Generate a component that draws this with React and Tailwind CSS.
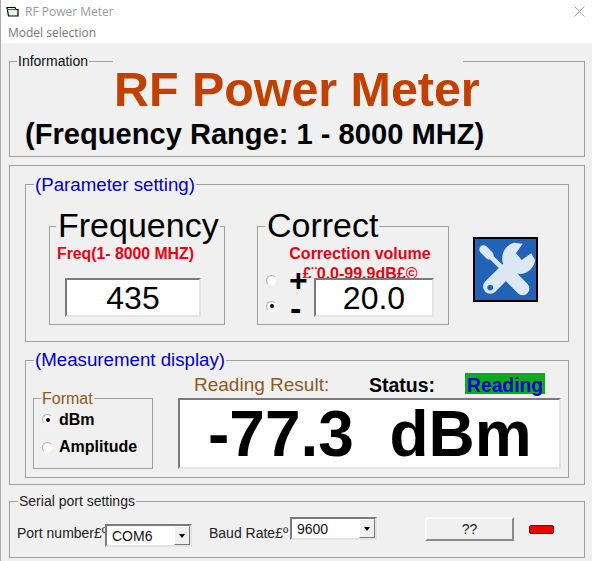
import React from 'react';

const Radio = ({ checked }) => (
  <span className="flex w-[11px] h-[11px] shrink-0 items-center justify-center rounded-full bg-[#fbfbfb] border border-t-[#b0b0b0] border-l-[#b0b0b0] border-r-[#f4f4f4] border-b-[#f4f4f4]">
    {checked && <span className="w-[4px] h-[4px] rounded-full bg-black"></span>}
  </span>
);

const Combo = ({ value, className }) => (
  <div className={`flex items-stretch h-[23px] bg-white border-2 border-t-[#7a7a7a] border-l-[#7a7a7a] border-r-[#e4e4e4] border-b-[#e4e4e4] ${className}`}>
    <span className="flex-1 pl-[5px] text-[14px] leading-[20px] text-[#111]">{value}</span>
    <span className="flex w-[16px] items-center justify-center bg-[#f0f0f0] border border-t-white border-l-white border-r-[#777] border-b-[#777]">
      <span className="w-0 h-0 border-x-[3.5px] border-x-transparent border-t-[4px] border-t-black"></span>
    </span>
  </div>
);

const ToolsIcon = () => (
  <svg viewBox="0 0 64 64" className="w-[61px] h-[61px]">
    <rect width="64" height="64" fill="#2263b8" />
    <g stroke="#dbe7f3" strokeLinecap="round" fill="none">
      <line x1="39" y1="41" x2="50" y2="52" strokeWidth="14" />
      <line x1="11" y1="13" x2="38" y2="40" strokeWidth="5" />
      <line x1="9" y1="11" x2="15" y2="17" strokeWidth="9" />
      <line x1="16" y1="50" x2="38" y2="28" strokeWidth="15" />
    </g>
    <path d="M41 4L50 5L43 15L49 22L59 15L63 22C62 33 50 40 40 35L29 25C27 14 33 6 41 4Z" fill="#dbe7f3" />
    <circle cx="16" cy="51" r="3" fill="#2263b8" />
  </svg>
);

export default function App() {
  return (
    <div className="w-[592px] h-[561px] overflow-hidden bg-[#f0f0f0] border-l border-[#a9a9a9] font-['Liberation_Sans',Arial,sans-serif] text-black">
      {/* Title bar + menu */}
      <div className="h-[43px] bg-white font-['Open_Sans',sans-serif]">
        <div className="flex h-[23px] items-center pl-[5px] pr-[7px]">
          <svg viewBox="0 0 13 12" className="w-[13px] h-[12px]">
            <path d="M1 1.5h8l1 2h2v6.5H2.5z" fill="#e8f4e8" stroke="#000" strokeWidth="1.2" />
            <path d="M1 3.5h9" stroke="#1a7a3a" strokeWidth="1" />
          </svg>
          <span className="ml-[6px] text-[12px] text-[#999]">RF Power Meter</span>
          <svg viewBox="0 0 11 11" className="ml-auto w-[11px] h-[11px]">
            <path d="M.5.5l10 10M10.5.5l-10 10" stroke="#8a8a8a" strokeWidth="0.8" />
          </svg>
        </div>
        <div className="pl-[7px] text-[12px] leading-[20px] text-[#777]">Model selection</div>
      </div>

      {/* Information */}
      <fieldset className="ml-[8px] mt-[10px] w-[576px] h-[104px] border border-[#a0a0a0] pl-[7px]">
        <legend className="px-[1px] text-[14px] leading-[16px] text-[#111]">Information</legend>
        <div className="-mt-[8px] ml-[96px] w-[350px] h-[50px] bg-[#f0f0f0] pl-[1px] pt-[2px] text-[48.4px] leading-[52px] font-bold whitespace-nowrap text-[#c24100]">
          RF Power Meter
        </div>
        <div className="ml-[8px] mt-[6px] text-[29.1px] leading-[34px] font-bold whitespace-nowrap">
          (Frequency Range: 1 - 8000 MHZ)
        </div>
      </fieldset>

      {/* Parameter + measurement */}
      <div className="ml-[8px] mt-[8px] w-[576px] h-[320px] border border-[#a0a0a0]">
        <fieldset className="ml-[15px] mt-[7px] w-[544px] h-[169px] border border-[#a0a0a0] pl-[8px]">
          <legend className="px-[1px] pt-[1px] text-[18.7px] leading-[22px] text-[#0000d0]">(Parameter setting)</legend>
          <div className="flex items-start pl-[15px] pt-[11px]">
            <fieldset className="w-[176px] h-[118px] border border-[#a0a0a0] pl-[6px]">
              <legend className="text-[34px] leading-[36px] pl-[2px] pr-[1px] pb-[2px]">Frequency</legend>
              <div className="ml-[1px] text-[15.8px] leading-[18px] font-bold text-[#ee0010] whitespace-nowrap">Freq(1- 8000 MHZ)</div>
              <div className="ml-[9px] mt-[15px] w-[136px] h-[39px] flex items-center justify-center bg-white border-2 border-t-[#7a7a7a] border-l-[#7a7a7a] border-r-[#e4e4e4] border-b-[#e4e4e4] text-[32px]">
                435
              </div>
            </fieldset>
            <fieldset className="ml-[32px] w-[192px] h-[118px] border border-[#a0a0a0] pl-[7px]">
              <legend className="text-[34px] leading-[36px] pl-[2px] pr-[1px] pb-[2px]">Correct</legend>
              <div className="ml-[15px] -mt-[1px] w-[160px] h-[34px] overflow-hidden text-center text-[16px] leading-[20px] font-bold text-[#ee0010]">
                Correction volume<br />£¨0.0-99.9dB£©
              </div>
              <div className="flex items-start -ml-[7px]">
                <div className="-mt-[11px] w-[56px] pl-[8px]">
                  <div className="flex h-[26px] items-center">
                    <Radio />
                    <span className="ml-[12px] text-[32px] leading-[26px] font-bold">+</span>
                  </div>
                  <div className="flex h-[26px] items-center">
                    <Radio checked />
                    <span className="ml-[13px] mt-[3px] text-[34px] leading-[26px] font-bold">-</span>
                  </div>
                </div>
                <div className="w-[120px] h-[39px] flex items-center justify-center bg-white border-2 border-t-[#7a7a7a] border-l-[#7a7a7a] border-r-[#e4e4e4] border-b-[#e4e4e4] text-[32px]">
                  20.0
                </div>
              </div>
            </fieldset>
            <button className="ml-[24px] mt-[30px] flex items-center justify-center w-[65px] h-[65px] border-2 border-black">
              <ToolsIcon />
            </button>
          </div>
        </fieldset>

        <fieldset className="ml-[15px] mt-[7px] w-[544px] h-[129px] border border-[#a0a0a0] pl-[8px]">
          <legend className="px-[1px] text-[18.7px] leading-[22px] text-[#0000d0]">(Measurement display)</legend>
          <div className="flex items-start -ml-[1px]">
            <fieldset className="mt-[18px] w-[120px] h-[80px] border border-[#a0a0a0] pl-[8px]">
              <legend className="-ml-[1px] px-[1px] pt-[1px] text-[16px] leading-[17px] text-[#8a5a20]">Format</legend>
              <div className="flex h-[25px] items-center">
                <Radio checked />
                <span className="ml-[6px] text-[16px] font-bold">dBm</span>
              </div>
              <div className="flex h-[30px] items-center">
                <Radio />
                <span className="ml-[6px] text-[16px] font-bold">Amplitude</span>
              </div>
            </fieldset>
            <div className="ml-[25px] w-[383px]">
              <div className="flex h-[27px] items-start pl-[16px]">
                <span className="w-[175px] mt-[3px] text-[19px] leading-[22px] text-[#8a5a20]">Reading Result:</span>
                <span className="w-[96px] mt-[3px] text-[19.5px] leading-[22px] font-bold">Status:</span>
                <span className="mt-[2px] w-[80px] h-[21px] bg-[#0cab1c] pl-[2px] text-[19.3px] leading-[25px] font-bold text-[#0000d0] whitespace-nowrap">Reading</span>
              </div>
              <div className="h-[71px] flex items-center pl-[28px] bg-white border-2 border-t-[#7a7a7a] border-l-[#7a7a7a] border-r-[#e4e4e4] border-b-[#e4e4e4] text-[64px] font-bold whitespace-pre">
                -77.3  dBm
              </div>
            </div>
          </div>
        </fieldset>
      </div>

      {/* Serial port settings */}
      <fieldset className="ml-[8px] mt-[8px] w-[576px] h-[65px] border border-[#a0a0a0] pl-[8px]">
        <legend className="px-[1px] text-[14px] leading-[16px] text-[#222]">Serial port settings</legend>
        <div className="flex items-start -ml-[1px] text-[14px] text-[#222]">
          <span className="mt-[16px] w-[88px] overflow-hidden whitespace-nowrap leading-[16px]">Port number£º</span>
          <Combo value="COM6" className="mt-[15px] w-[87px]" />
          <span className="ml-[17px] mt-[16px] w-[81px] overflow-hidden whitespace-nowrap leading-[16px]">Baud Rate£º</span>
          <Combo value="9600" className="mt-[8px] w-[87px]" />
          <button className="ml-[48px] mt-[8px] w-[89px] h-[24px] bg-[#f0f0f0] border-2 border-t-[#f8f8f8] border-l-[#f8f8f8] border-r-[#8a8a8a] border-b-[#8a8a8a] text-[14px] text-[#222]">
            ??
          </button>
          <span className="ml-[15px] mt-[16px] w-[25px] h-[9px] rounded-[2px] bg-[#ee0000] border border-[#800]"></span>
        </div>
      </fieldset>
    </div>
  );
}
